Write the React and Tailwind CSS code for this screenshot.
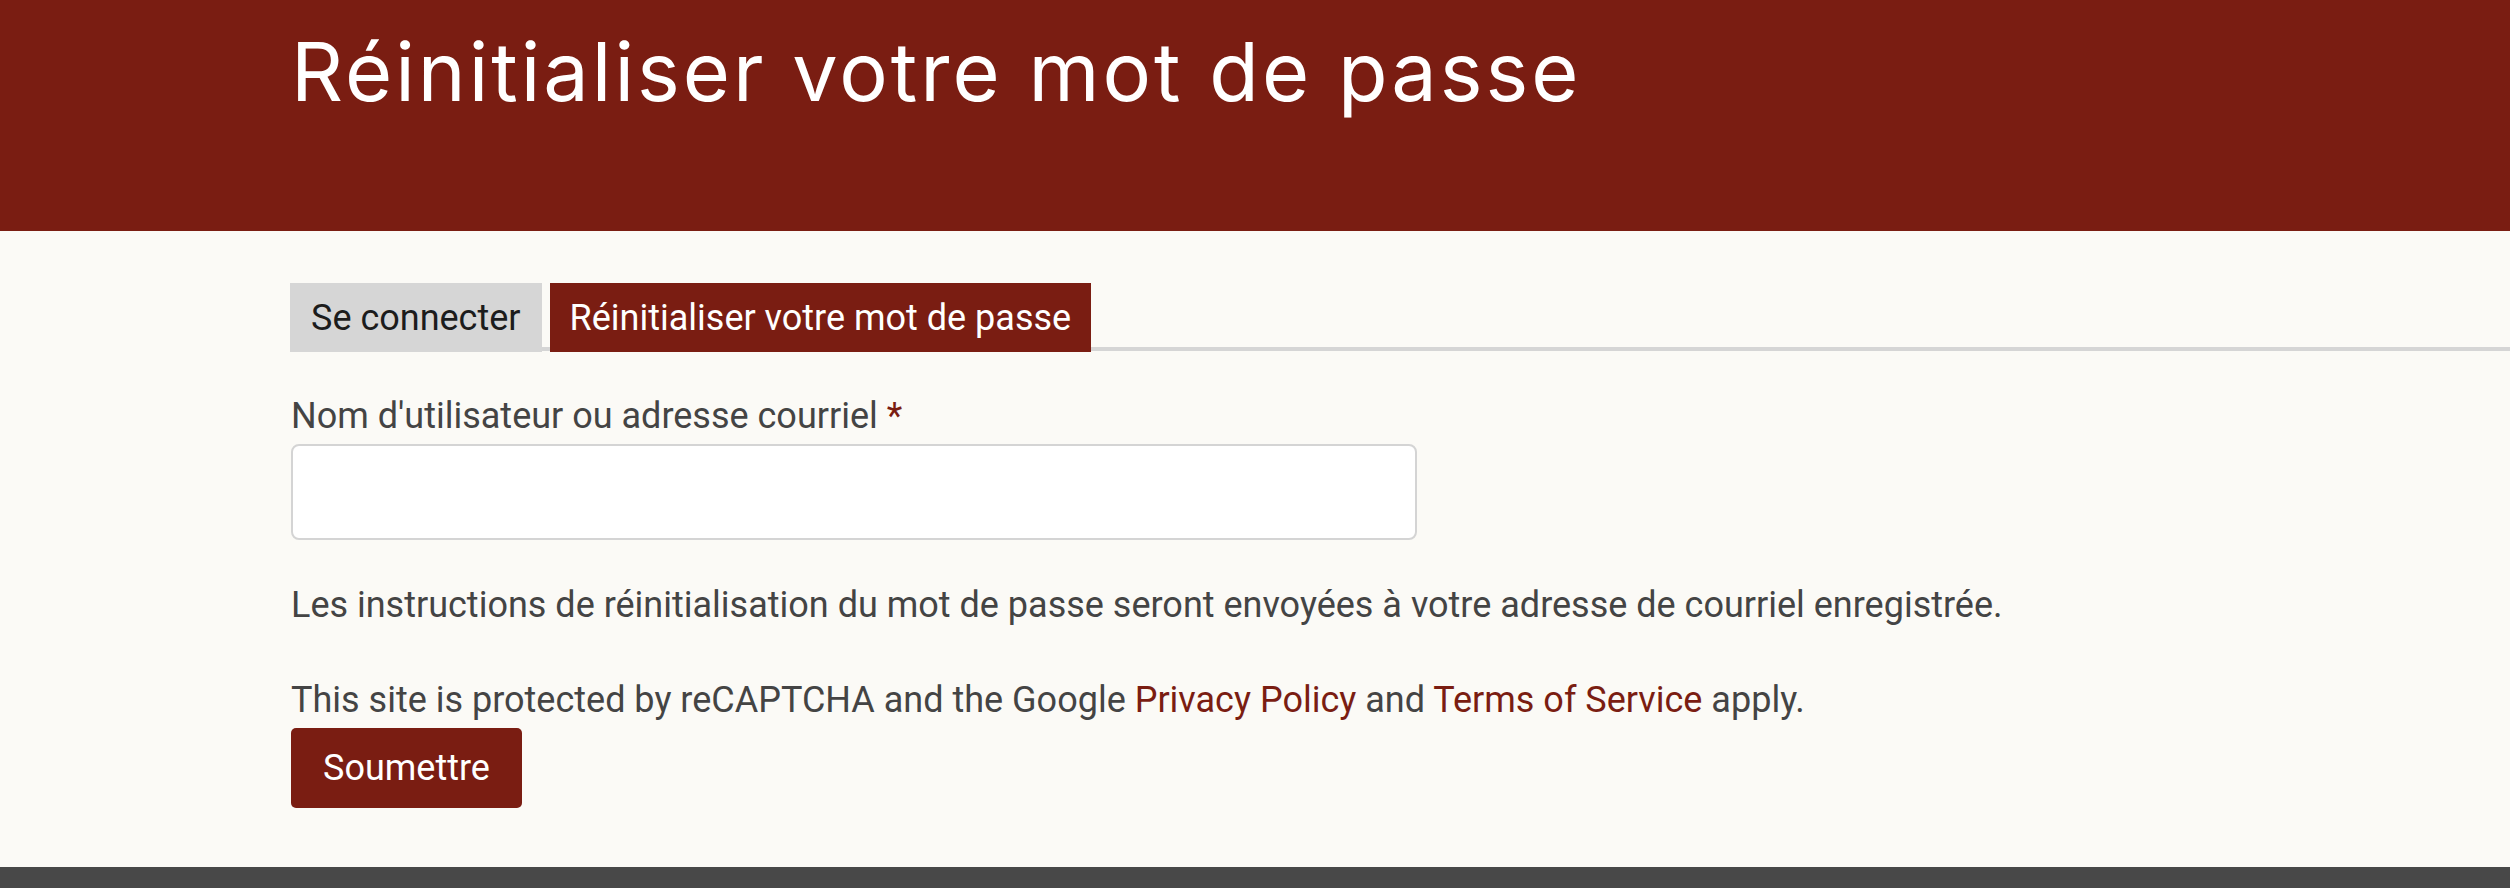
import React, { useState } from 'react';

const red = 'bg-[#7a1d12]';

export default function App() {
    const [value, setValue] = useState('');

    return (
        <div className="min-h-screen bg-[#fbfaf6] font-['Roboto',sans-serif] text-[#444444]">
            <header className={`${red} h-[231px] pl-[291px] pt-[32px]`}>
                <h1 className="font-['Inter',sans-serif] text-[81px] leading-none font-normal text-white tracking-[3px]">
                    Réinitialiser votre mot de passe
                </h1>
            </header>

            <main className="pl-[290px] pt-[52px] pb-[59px]">
                <nav className="flex gap-[8px] border-b-4 border-[#d5d5d5]">
                    <a href="#" className="h-[69px] -mb-[5px] px-[21px] flex items-center bg-[#d6d6d6] text-[#1c1c1c] text-[36px] leading-none">
                        Se connecter
                    </a>
                    <a href="#" className={`h-[69px] -mb-[5px] px-[20px] flex items-center ${red} text-white text-[36px] leading-none`}>
                        Réinitialiser votre mot de passe
                    </a>
                </nav>

                <form className="pl-[1px]" onSubmit={(e) => e.preventDefault()}>
                    <label className="block mt-[38px] text-[36px] leading-[54px]">
                        Nom d'utilisateur ou adresse courriel <span className="text-[#7a1d12]">*</span>
                    </label>
                    <input
                        type="text"
                        value={value}
                        onChange={(e) => setValue(e.target.value)}
                        className="block mt-[1px] w-[1126px] h-[96px] bg-white border-2 border-[#d4d4d4] rounded-[8px] px-4 text-[36px] outline-none"
                    />

                    <p className="mt-[38px] text-[36px] leading-[54px]">
                        Les instructions de réinitialisation du mot de passe seront envoyées à votre adresse de courriel enregistrée.
                    </p>

                    <p className="mt-[41px] text-[36px] leading-[54px]">
                        This site is protected by reCAPTCHA and the Google{' '}
                        <a href="#" className="text-[#7a1d12]">Privacy Policy</a> and{' '}
                        <a href="#" className="text-[#7a1d12]">Terms of Service</a> apply.
                    </p>

                    <button
                        type="submit"
                        className={`mt-[1px] h-[80px] px-[32px] rounded-[5px] ${red} text-white text-[36px] leading-none`}
                    >
                        Soumettre
                    </button>
                </form>
            </main>

            <footer className="h-[60px] bg-[#484848]" />
        </div>
    );
}
